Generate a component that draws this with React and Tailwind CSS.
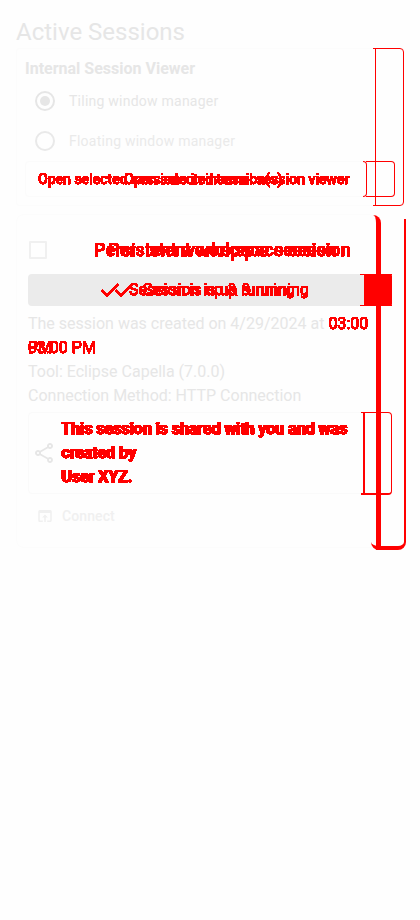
import React from "react";
import { MdOpenInBrowser, MdOutlineShare } from "react-icons/md";

function Threshold() {
  return (
    <svg width="0" height="0" className="absolute">
      <filter id="solid" x="-5%" y="-10%" width="110%" height="120%">
        <feComponentTransfer>
          <feFuncA type="discrete" tableValues="0 1 1 1 1 1 1 1 1 1 1 1 1 1 1 1 1 1 1 1 1 1 1 1 1" />
        </feComponentTransfer>
      </filter>
    </svg>
  );
}

const red = "text-[#ff0000] [filter:url(#solid)] [-webkit-text-stroke:0.25px_#ff0000] whitespace-nowrap";

// Stacks its children in one grid cell, so each revision lies over the last.
function Stack({ className, children }) {
  return <div className={`grid [&>*]:[grid-area:1/1] ${className}`}>{children}</div>;
}

function Running({ className }) {
  return (
    <div className={`flex items-center gap-[7px] leading-6 ${red} ${className}`}>
      <svg viewBox="0 0 24 24" className="size-6" fill="currentColor" stroke="currentColor" strokeWidth="0.5">
        <path d="M9 16.17 4.83 12l-1.42 1.41L9 19 21 7l-1.41-1.41z" />
      </svg>
      Session is up &amp; running
    </div>
  );
}

function SharedNote({ className }) {
  return (
    <div className={`font-medium leading-6 tracking-[-0.02px] ${red} ${className}`}>
      This session is shared with you and was
      <br />
      created by
      <br />
      User XYZ.
    </div>
  );
}

export default function App() {
  return (
    <div className="relative flex h-[920px] w-[420px] flex-col overflow-hidden bg-[#fefefe] px-4 font-['Roboto',sans-serif] text-[16px] text-[#e6e6e6]">
      <Threshold />
      <h1 className="h-12 pt-4 text-[24px] leading-8">Active Sessions</h1>

      <section className="flex h-[158px] w-[360px] flex-col rounded border border-r-0 border-[#fcfcfc] px-2 pt-2">
        <h2 className="h-6 font-bold leading-6">Internal Session Viewer</h2>
        <div className="flex h-10 items-center pl-[10px] text-[14px] tracking-[0.24px]">
          <span className="mr-3.5 flex size-5 items-center justify-center rounded-full border-2 border-[#e6e6e6]">
            <span className="size-2.5 rounded-full bg-[#e6e6e6]" />
          </span>
          Tiling window manager
        </div>
        <div className="flex h-10 items-center pl-[10px] text-[14px] tracking-[0.24px] text-[#eaeaea]">
          <span className="mr-3.5 size-5 rounded-full border-2 border-[#e9e9e9]" />
          Floating window manager
        </div>
        <Stack className="h-9 w-[342px] items-center rounded border border-[#fbfbfb] pl-3 text-[14px] font-medium leading-5">
          <span className={`tracking-[0.02px] ${red}`}>Open selected sessions in internal session viewer</span>
          <span className={`ml-[86px] ${red}`}>Open selected session(s)</span>
        </Stack>
      </section>

      <section className="mt-2 flex h-[334px] w-[360px] flex-col rounded-lg border border-r-0 border-[#fcfcfc] px-[11px] pt-[21px]">
        <div className="flex h-7 items-center pl-px">
          <span className="size-[18px] rounded-[1px] border-2 border-[#f0f0f0]" />
          <Stack className="ml-[47px] text-[18px] font-medium leading-7 tracking-[0.07px]">
            <span className={red}>Persistent workspace session</span>
            <span className={`ml-[14px] ${red}`}>Persistent workspace session</span>
          </Stack>
        </div>
        <Stack className="mt-[10px] h-8 w-[336px] shrink-0 items-center justify-items-start rounded bg-[#ebebeb]">
          <Running className="ml-[70px]" />
          <Running className="ml-[84px]" />
        </Stack>
        <div className="mt-1.5 whitespace-nowrap leading-6">
          <div className="flex gap-1">
            The session was created on 4/29/2024 at <span className={red}>03:00</span>
          </div>
          <Stack className="h-6 justify-items-start">
            <span className={red}>03:00 PM</span>
            <span className={red}>PM</span>
          </Stack>
          <div>Tool: Eclipse Capella (7.0.0)</div>
          <div>Connection Method: HTTP Connection</div>
        </div>
        <div className="mt-[4px] flex h-[82px] w-[336px] items-center rounded border border-[#fafafa] pl-[3px]">
          <MdOutlineShare className="size-6" />
          <Stack className="ml-[5px]">
            <SharedNote className="" />
            <SharedNote className="ml-px" />
          </Stack>
        </div>
        <div className="flex h-11 items-center pl-2 text-[14px] font-medium tracking-[0.1px] text-[#f0f0f0]">
          <MdOpenInBrowser className="mr-2 size-[18px]" />
          Connect
        </div>
      </section>

      <div className="absolute left-[375px] top-12 h-[158px] w-[29px] rounded-r border border-[#ff0000]" />
      <div className="absolute left-[373px] top-12 h-[158px] w-1 border-y border-[#ff0000]" />
      <div className="absolute left-[366px] top-[161px] h-9 w-[29px] rounded-r border border-l-0 border-[#ff0000]" />
      <div className="absolute left-[363px] top-[161px] h-9 w-1 rounded-r border border-l-0 border-[#ff0000]" />
      <div className="absolute left-[366px] top-[161px] h-9 w-1 border-y border-[#ff0000]" />
      <div className="absolute left-[373px] top-[215px] h-[335px] w-2 rounded-tr-lg border-r-[5px] border-[#ff0000]" />
      <div className="absolute left-[371px] top-[219px] h-[331px] w-[35px] rounded-b-lg border-b-4 border-r-2 border-[#ff0000]" />
      <div className="absolute left-[360px] top-[274px] h-px w-8 bg-[#ff0000]" />
      <div className="absolute left-[360px] top-[305px] h-px w-8 bg-[#ff0000]" />
      <div className="absolute left-[364px] top-[274px] h-8 w-7 rounded-r-[2px] bg-[#ff0000]" />
      <div className="absolute left-[363px] top-[412px] h-[83px] w-[29px] rounded-r border border-b-2 border-l-2 border-[#ff0000]" />
      <div className="absolute left-[361px] top-[412px] h-[83px] w-1 border-b-2 border-t border-[#ff0000]" />
    </div>
  );
}
